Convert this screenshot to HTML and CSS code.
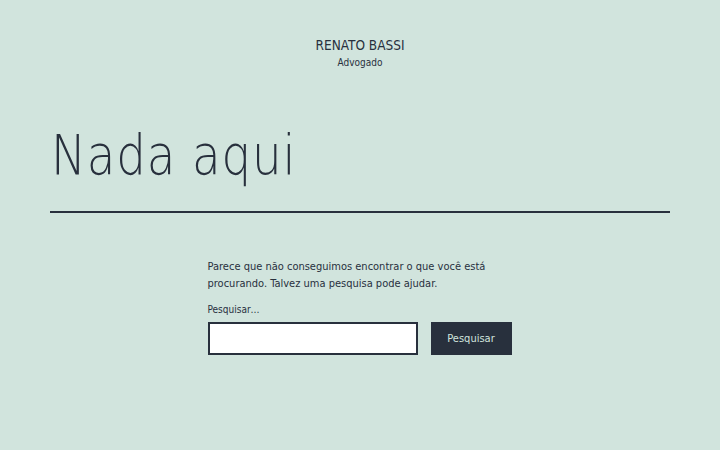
FILE: index.html
```html
<!DOCTYPE html>
<html lang="pt-BR">
<head>
<meta charset="utf-8">
<link rel="stylesheet" href="styles.css">
</head>
<body>
<header class="site-header">
  <p class="site-title">RENATO BASSI</p>
  <p class="site-description">Advogado</p>
</header>
<main class="site-main">
  <header class="page-header">
    <h1 class="page-title"><span class="page-title-text">Nada aqui</span></h1>
  </header>
  <div class="page-content">
    <p class="intro">Parece que não conseguimos encontrar o que você está procurando. Talvez uma pesquisa pode ajudar.</p>
    <form class="search-form">
      <label class="search-label" for="s">Pesquisar…</label>
      <div class="search-row">
        <input class="search-field" type="search" id="s">
        <button class="search-submit" type="button">Pesquisar</button>
      </div>
    </form>
  </div>
</main>
</body>
</html>
```
FILE: styles.css
```css
html, body {
  margin: 0;
  padding: 0;
}
body {
  background: #d1e4dd;
  color: #28303d;
  font-family: "DejaVu Sans Condensed", "DejaVu Sans", sans-serif;
  width: 720px;
  height: 450px;
  overflow: hidden;
}
.site-header {
  padding-top: 37px;
  text-align: center;
}
.site-title {
  margin: 0;
  font-size: 13.5px;
  line-height: 16px;
}
.site-description {
  margin: 3px 0 0;
  font-size: 10px;
  line-height: 14px;
}
.site-main {
  padding: 0 50px;
}
.page-header {
  border-bottom: 2px solid #28303d;
  margin-top: 51px;
  padding-bottom: 22px;
}
.page-title {
  margin: 0;
  font-family: "DejaVu Sans", sans-serif;
  font-weight: 200;
  font-size: 56px;
  line-height: 68px;
}
.page-title-text {
  display: inline-block;
  margin-left: 1px;
  letter-spacing: 1px;
  transform: scaleX(0.835);
  transform-origin: left center;
}
.page-content {
  width: 305px;
  margin: 45px auto 0;
  font-size: 11px;
}
.intro {
  margin: 0;
  line-height: 17px;
}
.search-form {
  margin-top: 10px;
}
.search-label {
  display: block;
  font-size: 10px;
  line-height: 16px;
}
.search-row {
  display: flex;
  gap: 13px;
  margin-top: 4px;
}
.search-field {
  box-sizing: border-box;
  width: 210px;
  height: 33px;
  margin: 0;
  border: 2px solid #28303d;
  background: #fff;
  padding: 0 8px;
}
.search-submit {
  box-sizing: border-box;
  width: 81px;
  height: 33px;
  margin: 0;
  border: none;
  background: #28303d;
  color: #d1e4dd;
  font-family: "DejaVu Sans Condensed", "DejaVu Sans", sans-serif;
  font-size: 11px;
}
```
